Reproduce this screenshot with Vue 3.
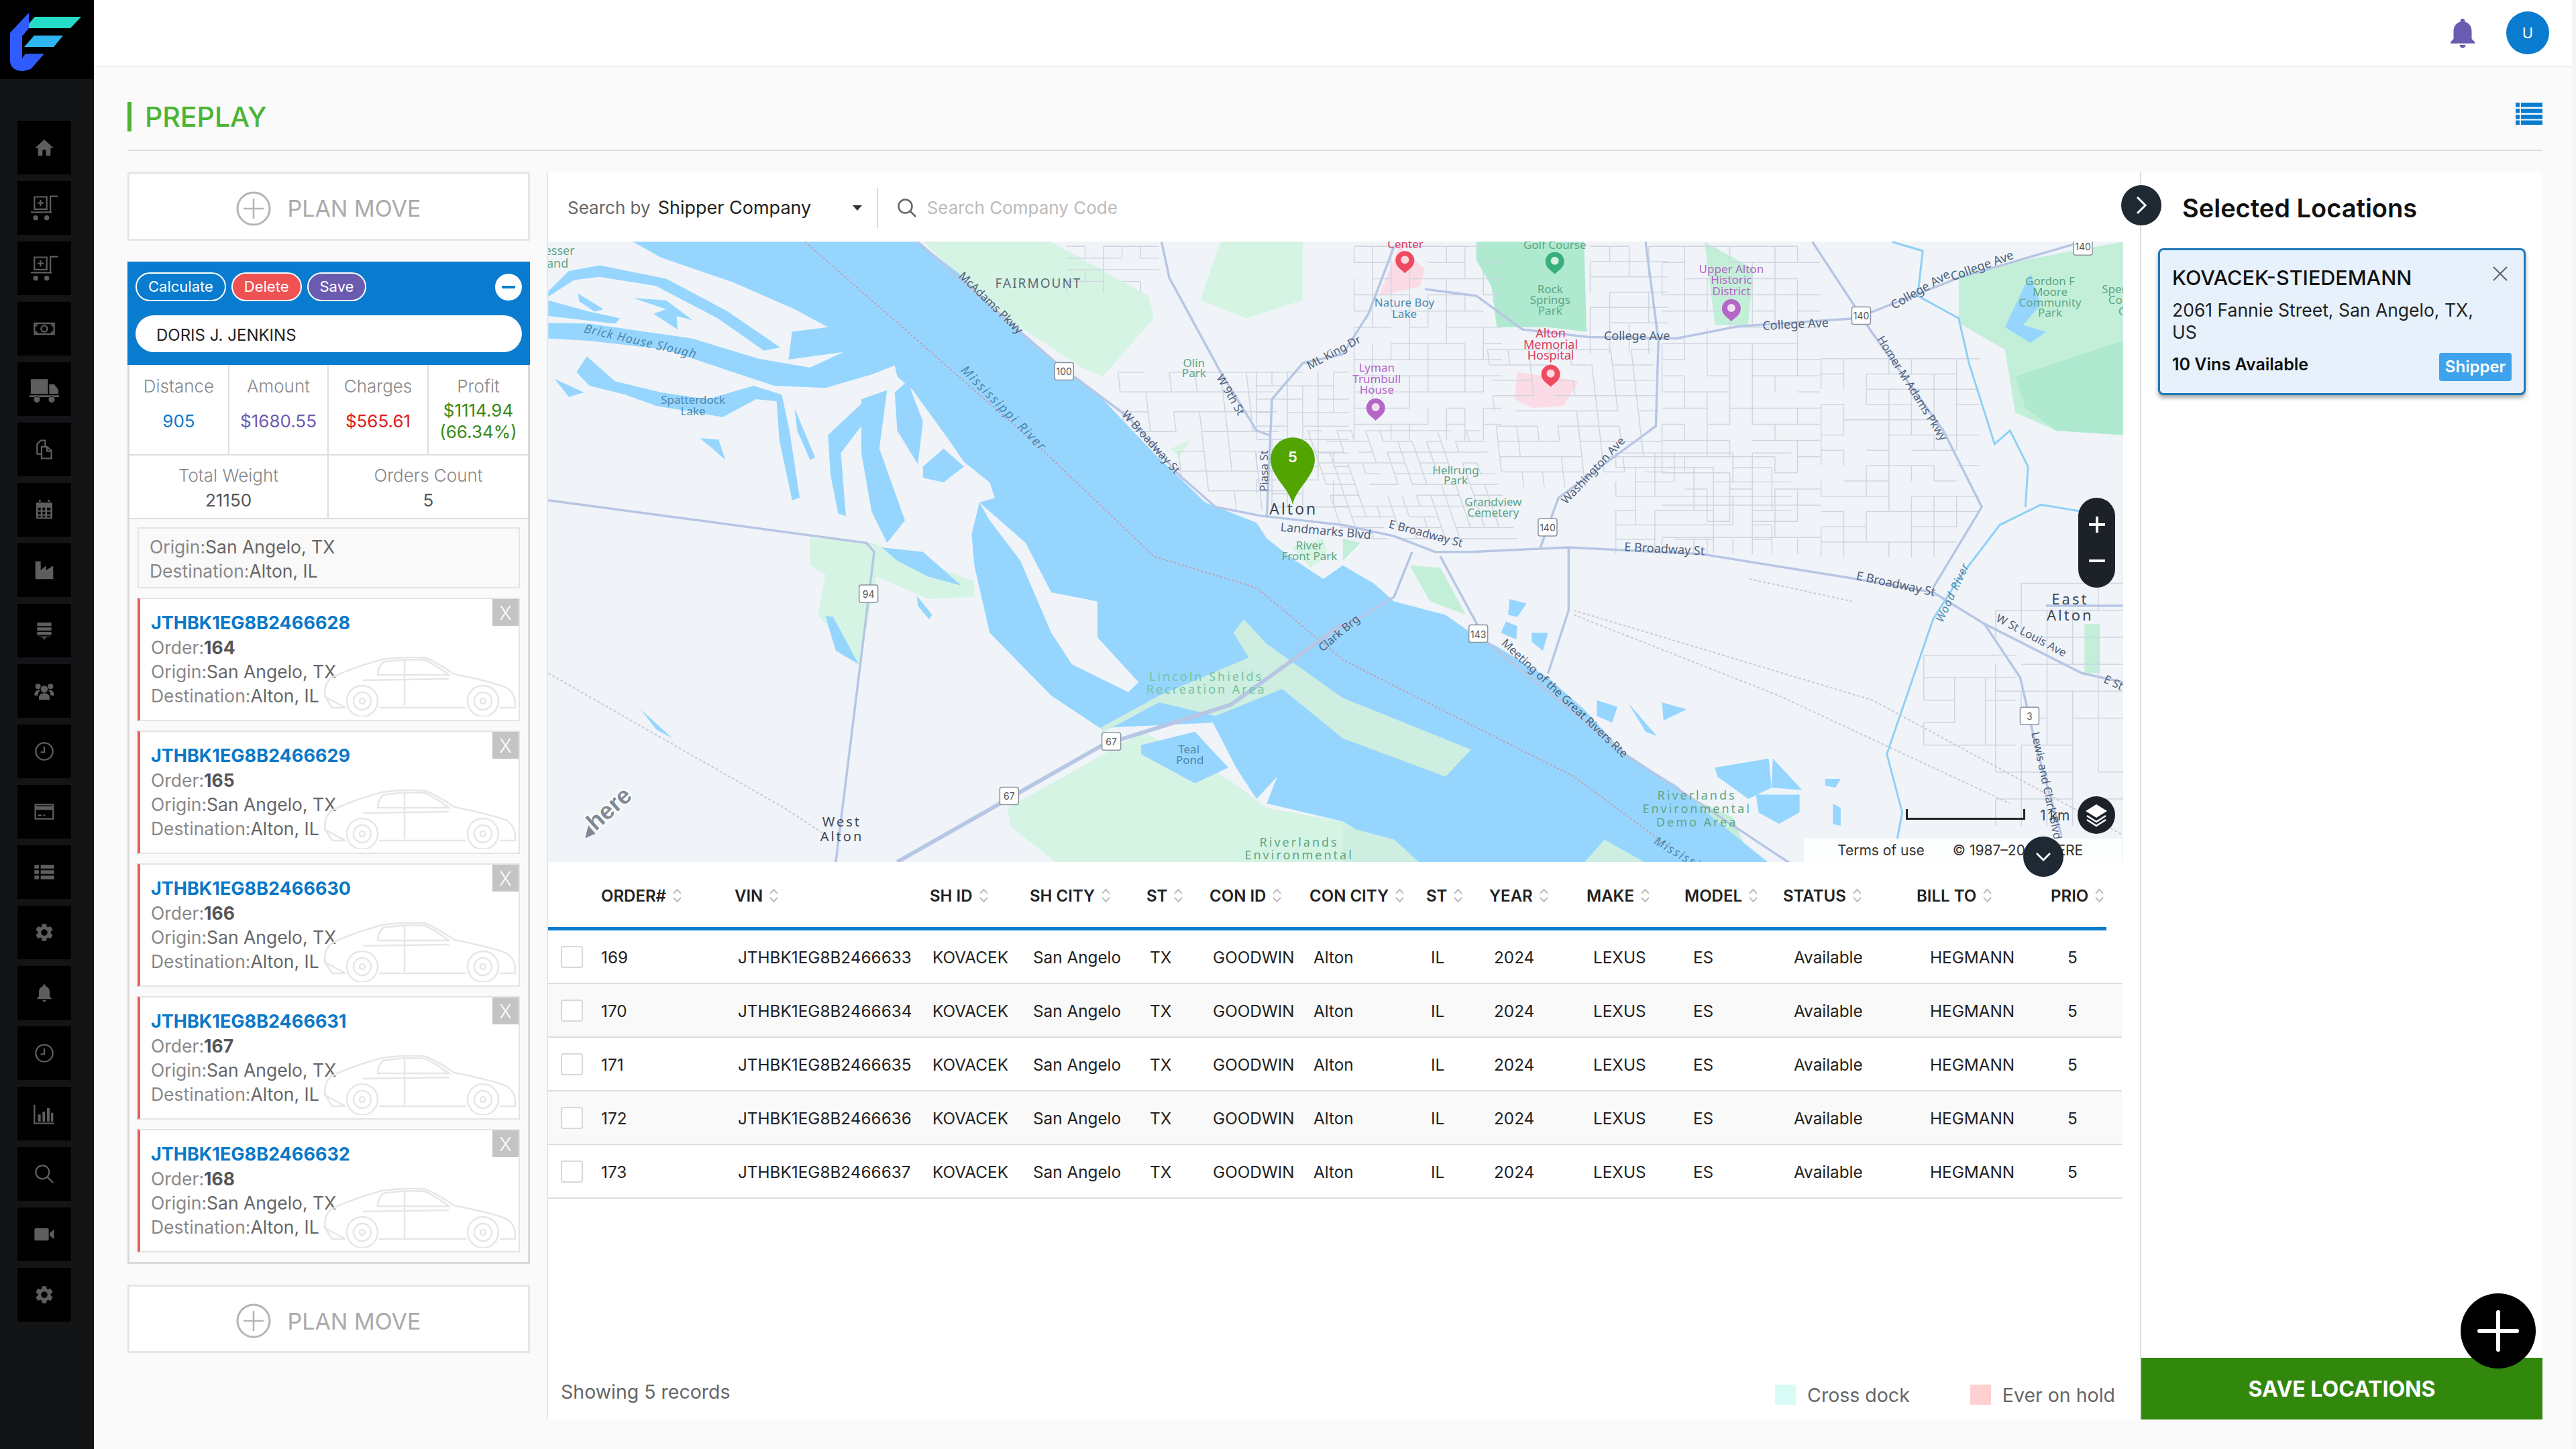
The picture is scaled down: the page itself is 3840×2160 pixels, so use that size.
<script setup>
// preplay screen: sidebar, plan move list, map, orders table, selected locations
const GEAR = "M19.14 12.94c.04-.3.06-.61.06-.94 0-.32-.02-.64-.07-.94l2.03-1.58a.49.49 0 0 0 .12-.61l-1.92-3.32a.488.488 0 0 0-.59-.22l-2.39.96c-.5-.38-1.03-.7-1.62-.94l-.36-2.54a.484.484 0 0 0-.48-.41h-3.84c-.24 0-.43.17-.47.41l-.36 2.54c-.59.24-1.13.57-1.62.94l-2.39-.96c-.22-.08-.47 0-.59.22L2.74 8.87c-.12.21-.08.47.12.61l2.03 1.58c-.05.3-.09.63-.09.94s.02.64.07.94l-2.03 1.58a.49.49 0 0 0-.12.61l1.92 3.32c.12.22.37.29.59.22l2.39-.96c.5.38 1.03.7 1.62.94l.36 2.54c.05.24.24.41.48.41h3.84c.24 0 .44-.17.47-.41l.36-2.54c.59-.24 1.13-.56 1.62-.94l2.39.96c.22.08.47 0 .59-.22l1.92-3.32c.12-.22.07-.47-.12-.61l-2.01-1.58zM12 15.6c-1.98 0-3.6-1.62-3.6-3.6s1.62-3.6 3.6-3.6 3.6 1.62 3.6 3.6-1.62 3.6-3.6 3.6z"
const BELL = "M12 22c1.1 0 2-.9 2-2h-4c0 1.1.9 2 2 2zm6-6v-5c0-3.07-1.63-5.64-4.5-6.32V4c0-.83-.67-1.5-1.5-1.5s-1.5.67-1.5 1.5v.68C7.64 5.36 6 7.92 6 11v5l-2 2v1h16v-1l-2-2z"
const CLOCK = { line: "M12 2.5a9.5 9.5 0 1 0 0 19 9.5 9.5 0 0 0 0-19zM12 6.5V13H8" }
const CART = {
  sz: 44,
  line: "M4 3h10v10H4zM9 5.500v5M6.500 8h5M17 15V2.500h6M1 15.500h17",
  fill: "M5 18a2 2 0 1 0 0 4 2 2 0 0 0 0-4zM14 18a2 2 0 1 0 0 4 2 2 0 0 0 0-4z"
}
const sideIcons = [
  { fill: "M12 3 1.5 12.5H5V21h5v-6.5h4V21h5v-8.500h3.500z" },
  CART,
  CART,
  { line: "M1 6h22v12H1zM4 6a3 3 0 0 1-3 3M20 6a3 3 0 0 0 3 3M4 18a3 3 0 0 0-3-3M20 18a3 3 0 0 1 3-3M12 8.500a3.500 3.500 0 1 0 0 7 3.500 3.500 0 0 0 0-7z" },
  { sz: 44, fill: "M1 4h14v12H1zM16 8h4l3.500 4.500V16H16zM0 17h24v1.500H0zM6 18a2.500 2.500 0 1 0 0 5 2.500 2.500 0 0 0 0-5zM18 18a2.500 2.500 0 1 0 0 5 2.500 2.500 0 0 0 0-5z" },
  { line: "M9 9h6l5 4.500V22H9zM15 9v5h5M9 17H4V6l4-4h5v7" },
  { fill: "M3 4h18v18H3zM6 1h2v2H6zM16 1h2v2h-2z", dark: "M5 9.500h3v3H5zM10 9.500h3v3h-3zM15 9.500h4v3h-4zM5 14h3v3H5zM10 14h3v3h-3zM15 14h4v3h-4zM5 18.500h3v2H5zM10 18.500h3v2h-3zM15 18.500h4v2h-4z" },
  { fill: "M2 2h6v10l6-5v5l8-5v15H2z" },
  { fill: "M5 3h14a1 1 0 0 1 1 1v3H4V4a1 1 0 0 1 1-1zM4 8.500h16V12H4zM4 13.500h16V17H4zM5 18.500h14L13 20l-1 3-1-3z" },
  { fill: "M12 6a4 4 0 1 0 0 8 4 4 0 0 0 0-8zM5 4a3 3 0 1 0 0 6 3 3 0 0 0 0-6zM19 4a3 3 0 1 0 0 6 3 3 0 0 0 0-6zM1 16c0-3 2-5 5-5l1.500.5C5.500 13 5 15 5 17H1zM23 16c0-3-2-5-5-5l-1.500.5c2 1.500 2.500 3.500 2.500 5.500h4zM12 14.500c-4 0-6 2.500-6 5V22h12v-2.500c0-2.500-2-5-6-5z" },
  CLOCK,
  { line: "M2 4h20v16H2zM2 9h20M5 16h4M11 16h2", fill: "M2 6h20v3H2z" },
  { fill: "M1 4h5v4H1zM8 4h15v4H8zM1 10h5v4H1zM8 10h15v4H8zM1 16h5v4H1zM8 16h15v4H8z" },
  { fill: GEAR },
  { fill: BELL },
  CLOCK,
  { line: "M1 2v21h22", fill: "M5 13h3v8H5zM10 10h3v11h-3zM15 6h3v15h-3zM19.500 11H22v10h-2.500z" },
  { line: "M10 2.500a7.500 7.500 0 1 0 0 15 7.500 7.500 0 0 0 0-15zM15.500 15.500 22 22" },
  { fill: "M3 5h12a2 2 0 0 1 2 2v10a2 2 0 0 1-2 2H3a2 2 0 0 1-2-2V7a2 2 0 0 1 2-2zM18 10.500l5-4v11l-5-4z" },
  { fill: GEAR }
]

const moves = [
  { vin: "JTHBK1EG8B2466628", order: 164 },
  { vin: "JTHBK1EG8B2466629", order: 165 },
  { vin: "JTHBK1EG8B2466630", order: 166 },
  { vin: "JTHBK1EG8B2466631", order: 167 },
  { vin: "JTHBK1EG8B2466632", order: 168 }
]

const headers = ["ORDER#", "VIN", "SH ID", "SH CITY", "ST", "CON ID", "CON CITY", "ST", "YEAR", "MAKE", "MODEL", "STATUS", "BILL TO", "PRIO"]
const rows = [
  ["169", "JTHBK1EG8B2466633"],
  ["170", "JTHBK1EG8B2466634"],
  ["171", "JTHBK1EG8B2466635"],
  ["172", "JTHBK1EG8B2466636"],
  ["173", "JTHBK1EG8B2466637"]
].map(r => [...r, "KOVACEK", "San Angelo", "TX", "GOODWIN", "Alton", "IL", "2024", "LEXUS", "ES", "Available", "HEGMANN", "5"])

// map drawing: coords are taken off the crops, X runs 0-3088, Y 180-1562
const OFF = 1568
const shift = pts => pts.map(([x, y]) => `${x + OFF},${y}`).join(" ")
const poly = pts => pts.map(([x, y]) => `${x},${y}`).join(" ")

const river = [[185,180],[740,180],[820,250],[900,340],[1000,440],[1100,530],[1200,650],[1300,760],[1400,805],[1420,840],[1470,885],[1530,930],[1568,900],[1628,940],[1668,980],[1768,1010],[1818,1050],[1868,1080],[1968,1150],[2038,1220],[2118,1320],[2218,1390],[2298,1470],[2398,1562],[1700,1562],[1568,1470],[1420,1430],[1440,1370],[1400,1420],[1360,1350],[1315,1250],[1095,1262],[1000,1190],[880,1050],[850,900],[845,830],[860,760],[890,750],[880,715],[830,670],[800,620],[730,510],[700,480],[695,455],[650,475],[560,505],[460,500],[380,470],[250,420],[100,400],[20,395],[20,360],[100,362],[300,395],[430,440],[530,460],[595,425],[488,442],[495,380],[565,370],[500,330],[380,270],[240,215]]
const landBits = [
  [[860,760],[950,850],[1000,960],[1090,980],[1090,1060],[1170,1160],[1150,1182],[1040,1120],[1000,1050],[940,890],[880,800]]
]
const islands = [
  [[1095,1262],[1210,1190],[1385,1105],[1355,1050],[1375,1020],[1420,1075],[1568,1195],[1818,1310],[1768,1370],[1568,1285],[1450,1175],[1320,1235],[1210,1205],[1100,1272]],
  [[1568,1480],[1668,1510],[1718,1562],[1568,1562]],
  [[2038,1562],[2078,1510],[2158,1562]]
]
const lakes = [
  [[20,290],[60,245],[120,232],[250,262],[370,335],[472,415],[440,422],[350,350],[230,278],[120,258],[70,265],[20,302]],
  [[20,310],[100,335],[160,350],[150,362],[60,350],[20,345]],
  [[78,295],[128,330],[110,335],[80,312]],
  [[185,305],[250,310],[302,355],[270,345],[272,375],[225,340],[250,330]],
  [[95,435],[150,490],[240,515],[330,530],[420,500],[475,520],[490,600],[510,750],[495,755],[470,620],[465,535],[425,530],[360,570],[230,545],[170,520],[100,500],[75,470]],
  [[32,485],[90,515],[60,525]],
  [[500,550],[540,660],[530,665],[505,600]],
  [[315,617],[352,620],[365,665],[340,640]],
  [[565,610],[630,540],[640,575],[590,650],[600,790],[585,785],[570,700]],
  [[630,530],[680,510],[665,640],[715,800],[680,850],[650,780],[630,650]],
  [[695,515],[720,490],[750,580],[740,675],[700,600]],
  [[750,680],[790,640],[830,680],[790,715],[750,705]],
  [[670,860],[750,870],[825,945],[760,925],[700,890]],
  [[738,968],[768,1010],[762,1020],[740,990]],
  [[560,1012],[575,1015],[625,1120],[580,1090]],
  [[200,1220],[262,1285],[230,1265]],
  [[1175,1300],[1280,1270],[1345,1350],[1280,1385],[1175,1320]]
]
const lakesRight = [
  [[325,975],[358,985],[340,1015],[322,1010]],
  [[318,1025],[340,1035],[338,1065],[308,1050]],
  [[368,1050],[400,1050],[390,1090],[368,1070]],
  [[495,1200],[535,1215],[525,1250],[495,1235]],
  [[555,1205],[612,1280],[590,1270]],
  [[622,1205],[670,1220],[625,1245]],
  [[725,1350],[830,1330],[835,1395],[790,1420],[730,1370]],
  [[838,1330],[895,1400],[835,1395]],
  [[805,1410],[890,1410],[890,1450],[850,1475],[810,1450]],
  [[940,1375],[970,1375],[960,1395],[940,1390]],
  [[955,1430],[970,1440],[970,1480],[955,1475]],
  [[1340,250],[1360,320],[1325,365],[1370,380],[1340,405],[1290,370]]
]
const lightGreen = [
  [[750,180],[1000,180],[1190,300],[1200,350],[1100,480],[1060,460],[900,340]],
  [[1290,310],[1330,180],[1490,180],[1490,310],[1380,350]],
  [[530,838],[650,850],[850,935],[850,970],[760,975],[660,925],[625,1120],[545,1010],[560,920],[530,900]],
  [[915,1440],[1180,1270],[1350,1380],[1420,1440],[1568,1470],[1700,1562],[1010,1562],[920,1480]],
  [[1233,640],[1272,620],[1250,660]],
  [[1468,860],[1530,840],[1540,880],[1505,905]]
]
const greenRight = [
  [[1200,250],[1420,200],[1520,180],[1520,610],[1390,600],[1310,560],[1290,420],[1200,360]],
  [[705,180],[800,240],[790,365],[725,365]],
  [[130,900],[190,905],[240,1010],[170,980]],
  [[0,840],[35,850],[0,890]],
  [[590,1370],[760,1460],[780,1515],[690,1500]],
  [[1445,1030],[1475,1030],[1475,1140],[1445,1140]]
]
const darkGreen = [
  [[260,180],[470,180],[475,380],[400,370],[300,370],[290,280],[260,220]],
  [[1310,480],[1520,400],[1520,610],[1390,600],[1330,550]]
]
const pink = [
  [[70,300],[110,190],[160,240],[150,280]],
  [[340,470],[460,490],[430,545],[370,550],[335,530]]
]
const mainRoads = [
  "M740 180 1010 450 1150 570 1250 700 1320 770 1410 790 1568 810 1668 835 1748 870 1818 870 2008 860 2268 875 2568 930 2718 960 2818 1030 2888 1150 2918 1300 2968 1500",
  "M2483 180 2598 380 2738 600 2813 770 2718 950",
  "M1728 285 1828 300 1918 375 2048 392 2218 395 2338 368 2568 350 2768 260 2993 185",
  "M2158 180 2183 400 2178 590 1988 750 1953 860",
  "M1568 430 1490 450 1430 530 1420 790",
  "M1568 430 1618 340 1668 190",
  "M1215 180 1230 260 1330 470 1400 600 1425 610",
  "M20 755 640 850 655 870 580 1562",
  "M1703 870 1668 970 1568 1040",
  "M1758 880 1848 1070 2118 1320 2438 1562",
  "M2818 1030 3008 1140 3088 1160",
  "M2008 860 2008 1000 1968 1140",
  "M2938 990 3088 990"
]
const highway = "M1568 1030 1350 1210 1100 1300 900 1430 700 1560"
const rails = [
  "M20 1140 480 1440 560 1500",
  "M2018 1010 2418 1190 2868 1430",
  "M2018 1000 2600 1200 3088 1500",
  "M2360 930 2560 980"
]
const border = "M520 180 980 640 1200 880 1400 950 1568 1110 2018 1370 2208 1530"
const creeks = [
  "M2638 180 2698 200 2688 300 2768 350 2788 450 2838 630 2868 600 2903 680 2898 770",
  "M3008 780 2928 765 2848 810 2768 930 2718 1020 2628 1320 2658 1450 2648 1510"
]

// pseudo-random street blocks so the town looks like a town and not a plain grid
let seed = 7
const rnd = () => (seed = (seed * 9301 + 49297) % 233280) / 233280
function grid(x, y, w, h, dx, dy, skew) {
  let d = ""
  for (let j = 0; j <= h; j += dy) {
    for (let i = 0; i < w; i += dx) {
      if (rnd() > 0.22) d += `M${x + i + j * skew} ${y + j}h${dx}`
      if (j < h && rnd() > 0.3) d += `M${x + i + j * skew} ${y + j}l${dy * skew} ${dy}`
    }
  }
  return d
}
const streets = [
  grid(1500, 600, 330, 240, 28, 24, 0.3),
  grid(1400, 470, 170, 300, 30, 30, 0),
  grid(1590, 190, 260, 400, 36, 36, 0),
  grid(1850, 420, 320, 280, 40, 34, 0.1),
  grid(2050, 190, 140, 220, 38, 34, 0),
  grid(2190, 190, 300, 680, 44, 36, 0),
  grid(2500, 440, 300, 440, 44, 34, 0),
  grid(2100, 650, 340, 200, 38, 32, 0),
  grid(1030, 190, 180, 80, 36, 26, 0),
  grid(1130, 470, 280, 280, 50, 44, 0.1),
  grid(2840, 940, 240, 500, 50, 60, 0),
  grid(2700, 1100, 130, 200, 60, 50, 0)
].join("")

const mx = x => x / 1.307 - 15
const my = y => y / 1.493 - 120
const GREEN = "#5fa585", BLUE = "#4d87ad", GRAY = "#5b6675", RED = "#dd3b5a", PUR = "#b465c6", ROAD = "#4f5f78"
const labels = []
const add = (ox, list) => list.forEach(([t, x, y, c, s = 18, r = 0, ls = 0, it = false]) =>
  labels.push({ t, x: mx(x + ox), y: my(y), c, s, r, ls, it }))
add(0, [
  ["esser", 42, 198, GREEN], ["and", 38, 227, GREEN],
  ["FAIRMOUNT", 975, 272, GRAY, 19, 0, 2],
  ["McAdams Pkwy", 883, 315, ROAD, 17, 44],
  ["Brick House Slough", 200, 400, BLUE, 18, 13, 1, true],
  ["Spatterdock", 302, 531, BLUE, 17], ["Lake", 302, 556, BLUE, 17],
  ["Mississippi River", 908, 550, BLUE, 19, 45, 2, true],
  ["W 9th St", 1350, 520, ROAD, 17, 60],
  ["Olin", 1278, 448, GREEN, 17], ["Park", 1278, 471, GREEN, 17],
  ["W Broadway St", 1195, 625, ROAD, 17, 48],
  ["ML King Dr", 1550, 425, ROAD, 17, -28],
  ["Piasa St", 1414, 690, ROAD, 17, -90],
  ["Landmarks Blvd", 1535, 822, ROAD, 18, 5],
  ["Alton", 1472, 773, "#3c4654", 23, 0, 3],
  ["River", 1503, 855, GREEN, 17], ["Front Park", 1503, 879, GREEN, 17],
  ["Clark Brg", 1560, 1050, ROAD, 17, -40],
  ["Lincoln Shields", 1302, 1146, "#74c3a0", 18, 0, 3], ["Recreation Area", 1302, 1175, "#74c3a0", 18, 0, 3],
  ["Teal", 1268, 1308, BLUE, 17], ["Pond", 1270, 1333, BLUE, 17],
  ["West", 592, 1470, "#3c4654", 20, 0, 3], ["Alton", 592, 1502, "#3c4654", 20, 0, 3],
  ["Riverlands", 1483, 1515, GREEN, 18, 0, 3], ["Environmental", 1483, 1544, GREEN, 18, 0, 3]
])
add(OFF, [
  ["Center", 122, 184, RED, 17], ["Golf Course", 413, 186, GREEN, 17],
  ["Rock", 404, 285, GREEN, 17], ["Springs", 404, 309, GREEN, 17], ["Park", 404, 332, GREEN, 17],
  ["Nature Boy", 120, 315, BLUE, 17], ["Lake", 120, 340, BLUE, 17],
  ["Alton", 405, 382, RED, 18], ["Memorial", 405, 407, RED, 18], ["Hospital", 405, 432, RED, 18],
  ["College Ave", 573, 388, ROAD, 18], ["College Ave", 882, 362, ROAD, 18, -3],
  ["College Ave", 1125, 285, ROAD, 18, -30], ["College Ave", 1245, 232, ROAD, 18, -20],
  ["Upper Alton", 757, 239, PUR, 17], ["Historic", 757, 264, PUR, 17], ["District", 757, 289, PUR, 17],
  ["Gordon F", 1378, 267, GREEN, 17], ["Moore", 1378, 291, GREEN, 17], ["Community", 1378, 314, GREEN, 17], ["Park", 1378, 337, GREEN, 17],
  ["Spen", 1505, 284, GREEN, 17], ["Con", 1512, 309, GREEN, 17], ["C", 1518, 334, GREEN, 17],
  ["Lyman", 66, 459, PUR, 17], ["Trumbull", 66, 484, PUR, 17], ["House", 66, 509, PUR, 17],
  ["Homer M Adams Pkwy", 1110, 505, ROAD, 17, 58],
  ["Washington Ave", 487, 688, ROAD, 17, -47],
  ["Hellrung", 220, 687, GREEN, 17], ["Park", 220, 710, GREEN, 17],
  ["Grandview", 293, 758, GREEN, 17], ["Cemetery", 293, 782, GREEN, 17],
  ["E Broadway St", 162, 828, ROAD, 17, 15], ["E Broadway St", 627, 862, ROAD, 18, 3], ["E Broadway St", 1078, 940, ROAD, 18, 12],
  ["Wood River", 1187, 960, BLUE, 17, -65, 1, true],
  ["East", 1417, 973, "#3c4654", 22, 0, 3], ["Alton", 1417, 1010, "#3c4654", 22, 0, 3],
  ["W St Louis Ave", 1342, 1055, ROAD, 17, 28],
  ["E St", 1502, 1160, ROAD, 17, 25],
  ["Meeting of the Great Rivers Rte", 433, 1195, ROAD, 17, 43],
  ["Lewis and Clark Blvd", 1372, 1390, ROAD, 17, 78],
  ["Riverlands", 690, 1411, GREEN, 18, 0, 3], ["Environmental", 690, 1441, GREEN, 18, 0, 3], ["Demo Area", 690, 1470, GREEN, 18, 0, 3],
  ["Mississippi", 670, 1550, BLUE, 18, 30, 2, true]
])
const shields = [
  ["100", 1025, 468], ["94", 644, 963], ["67", 1117, 1292], ["67", 918, 1413],
  ["140", 399 + OFF, 815], ["143", 264 + OFF, 1052], ["3", 1338 + OFF, 1235], ["140", 1010 + OFF, 344], ["140", 1442 + OFF, 190]
].map(([t, x, y]) => ({ t, x: mx(x), y: my(y) }))
const pins = [
  [121, 220, "#ef4a5f"], [413, 222, "#39b07c"], [757, 327, "#b465c6"], [405, 473, "#ef4a5f"], [64, 548, "#b465c6"]
].map(([x, y, c]) => ({ x: mx(x + OFF), y: my(y), c }))
</script>

<template>
  <div class="page">
    <aside class="side">
      <div class="logo">
        <svg width="140" height="118" viewBox="0 0 140 118">
          <path d="M52 25h69l-16 17H37z" fill="#26dcc8" />
          <path d="M51 53h43L80 70H36z" fill="#2fb6f2" />
          <path d="M43 19 15 49v43q2 14 20 14l11-3 20-23H38l-5 7V54l10-12z" fill="#2f5bff" />
        </svg>
      </div>
      <nav class="side-nav">
        <div v-for="(ic, i) in sideIcons" :key="i" class="side-btn">
          <svg :width="ic.sz || 32" :height="ic.sz || 32" viewBox="0 0 24 24">
            <path v-if="ic.fill" :d="ic.fill" fill="#5e5e5e" />
            <path v-if="ic.dark" :d="ic.dark" fill="#000" />
            <path v-if="ic.line" :d="ic.line" fill="none" stroke="#5e5e5e" :stroke-width="ic.sz ? 1.2 : 1.7" />
          </svg>
        </div>
      </nav>
    </aside>

    <div class="main">
      <header class="topbar">
        <svg class="top-bell" width="54" height="54" viewBox="0 0 24 24"><path :d="BELL" fill="#6a5bb0" /></svg>
        <div class="avatar">U</div>
      </header>

      <div class="content">
        <div class="title-row">
          <h1 class="title">PREPLAY</h1>
          <svg width="40" height="33" viewBox="0 0 40 33">
            <path d="M0 0h6v6.500H0zM8 0h32v6.500H8zM0 9h6v6.500H0zM8 9h32v6.500H8zM0 18h6v6.500H0zM8 18h32v6.500H8zM0 26.500h6V33H0zM8 26.500h32V33H8z" fill="#0a7ccf" />
          </svg>
        </div>

        <div class="body">
          <section class="left">
            <button class="plan">
              <svg width="52" height="52" viewBox="0 0 52 52"><circle cx="26" cy="26" r="24" fill="none" stroke="#b5b5b5" stroke-width="3" /><path d="M26 11v30M11 26h30" stroke="#b5b5b5" stroke-width="2.500" /></svg>
              PLAN MOVE
            </button>

            <div class="move">
              <div class="move-head">
                <div class="btns">
                  <span class="pill">Calculate</span>
                  <span class="pill red">Delete</span>
                  <span class="pill purple">Save</span>
                  <span class="minus"><i></i></span>
                </div>
                <div class="driver">DORIS J. JENKINS</div>
              </div>

              <div class="stats">
                <div class="stat"><span class="lbl">Distance</span><div class="val c-blue">905</div></div>
                <div class="stat"><span class="lbl">Amount</span><div class="val c-purple">$1680.55</div></div>
                <div class="stat"><span class="lbl">Charges</span><div class="val c-red">$565.61</div></div>
                <div class="stat last"><span class="lbl">Profit</span><div class="val c-green">$1114.94<br />(66.34%)</div></div>
              </div>
              <div class="totals">
                <div class="total"><span class="lbl">Total Weight</span><b>21150</b></div>
                <div class="total last"><span class="lbl">Orders Count</span><b>5</b></div>
              </div>

              <div class="route">
                <div><span class="muted">Origin:</span>San Angelo, TX</div>
                <div><span class="muted">Destination:</span>Alton, IL</div>
              </div>

              <div v-for="m in moves" :key="m.vin" class="car">
                <svg class="car-bg" width="288" height="89" viewBox="0 0 288 89" fill="none" stroke="#e6e6e6" stroke-width="2.500">
                  <path d="M4 60C2 50 4 40 12 32 30 22 60 12 88 4 120 0 140 0 154 2 170 8 184 18 196 26 225 32 255 38 274 46 284 52 288 62 287 76H264M214 76H84M34 76H14L4 60Z" />
                  <path d="M90 8C84 14 82 20 82 27H188C176 18 165 10 152 5 130 3 108 5 90 8ZM122 5V27M60 35 188 33M122 27V74" />
                  <circle cx="59" cy="66" r="23" /><circle cx="59" cy="66" r="13" /><circle cx="59" cy="66" r="4" />
                  <circle cx="239" cy="66" r="23" /><circle cx="239" cy="66" r="13" /><circle cx="239" cy="66" r="4" />
                </svg>
                <span class="x">X</span>
                <div class="vin">{{ m.vin }}</div>
                <div><span class="muted">Order:</span><b>{{ m.order }}</b></div>
                <div><span class="muted">Origin:</span>San Angelo, TX</div>
                <div><span class="muted">Destination:</span>Alton, IL</div>
              </div>
            </div>

            <button class="plan bottom">
              <svg width="52" height="52" viewBox="0 0 52 52"><circle cx="26" cy="26" r="24" fill="none" stroke="#b5b5b5" stroke-width="3" /><path d="M26 11v30M11 26h30" stroke="#b5b5b5" stroke-width="2.500" /></svg>
              PLAN MOVE
            </button>
          </section>

          <section class="center">
            <div class="search">
              <span class="by">Search by</span>
              <span class="by-val">Shipper Company</span>
              <svg class="caret" width="14" height="8" viewBox="0 0 14 8"><path d="M0 0h14L7 8z" fill="#333" /></svg>
              <span class="sep"></span>
              <svg width="30" height="30" viewBox="0 0 30 30" fill="none" stroke="#666" stroke-width="2.600"><circle cx="12.500" cy="12.500" r="10" /><path d="M20 20l8 8" /></svg>
              <span class="ph">Search Company Code</span>
            </div>

            <div class="map">
              <svg class="map-svg" width="2348" height="925" viewBox="0 0 2348 925">
                <rect width="2348" height="925" fill="#f0f4f9" />
                <g transform="translate(-15 -120) scale(.7651 .6698)">
                  <polygon v-for="(p, i) in lightGreen" :key="'lg' + i" :points="poly(p)" fill="#d6f4e4" />
                  <polygon v-for="(p, i) in greenRight" :key="'gr' + i" :points="shift(p)" fill="#c3efd9" />
                  <polygon v-for="(p, i) in darkGreen" :key="'dg' + i" :points="shift(p)" fill="#aee9d0" />
                  <polygon v-for="(p, i) in pink" :key="'pk' + i" :points="shift(p)" fill="#fbdbe6" />
                  <path :d="streets" fill="none" stroke="#cfd6e0" stroke-width="1.500" vector-effect="non-scaling-stroke" />
                  <polygon :points="poly(river)" fill="#96d6fe" />
                  <polygon v-for="(p, i) in landBits" :key="'lb' + i" :points="poly(p)" fill="#f0f4f9" />
                  <polygon v-for="(p, i) in islands" :key="'is' + i" :points="poly(p)" fill="#cdeee0" />
                  <polygon v-for="(p, i) in lakes" :key="'lk' + i" :points="poly(p)" fill="#96d6fe" />
                  <polygon v-for="(p, i) in lakesRight" :key="'lr' + i" :points="shift(p)" fill="#96d6fe" />
                  <path v-for="(d, i) in creeks" :key="'cr' + i" :d="d" fill="none" stroke="#8fd0f6" stroke-width="3" vector-effect="non-scaling-stroke" />
                  <path :d="border" fill="none" stroke="#c99ab0" stroke-width="2" stroke-dasharray="3 3" vector-effect="non-scaling-stroke" />
                  <path v-for="(d, i) in rails" :key="'rl' + i" :d="d" fill="none" stroke="#c8ccd2" stroke-width="2" stroke-dasharray="4 3" vector-effect="non-scaling-stroke" />
                  <path v-for="(d, i) in mainRoads" :key="'rd' + i" :d="d" fill="none" stroke="#b7c6e4" stroke-width="3.500" vector-effect="non-scaling-stroke" />
                  <path :d="highway" fill="none" stroke="#b7c6e4" stroke-width="6" vector-effect="non-scaling-stroke" />
                </g>
                <g v-for="s in shields" :key="s.t + s.x">
                  <rect :x="s.x - 14" :y="s.y - 13" width="28" height="26" rx="3" fill="#fff" stroke="#8d94a0" stroke-width="1.500" />
                  <text :x="s.x" :y="s.y + 6" text-anchor="middle" font-size="14" fill="#555">{{ s.t }}</text>
                </g>
                <g v-for="p in pins" :key="p.x">
                  <path :d="`M${p.x} ${p.y + 20}c-6-6-14-10-14-19a14 14 0 0 1 28 0c0 9-8 13-14 19z`" :fill="p.c" />
                  <circle :cx="p.x" :cy="p.y" r="6" fill="#fff" opacity=".8" />
                </g>
                <text v-for="(l, i) in labels" :key="'lb' + i" :x="l.x" :y="l.y" :fill="l.c" :font-size="l.s" :font-style="l.it ? 'italic' : 'normal'" :letter-spacing="l.ls" text-anchor="middle" dominant-baseline="central" :transform="l.r ? `rotate(${l.r} ${l.x} ${l.y})` : null" class="map-label">{{ l.t }}</text>
                <g transform="rotate(-42 88 848)">
                  <path d="M36 857 52 846V862z" fill="#7f8a96" />
                  <text x="92" y="860" class="here" text-anchor="middle">here</text>
                </g>
              </svg>

              <div class="pin">
                <svg width="66" height="100" viewBox="0 0 66 100"><path d="M33 100C28 76 0 58 0 33a33 33 0 0 1 66 0c0 25-28 43-33 67z" fill="#52a400" /></svg>
                <span>5</span>
              </div>
              <div class="zoomer">
                <svg width="30" height="30" viewBox="0 0 30 30"><path d="M15 3v24M3 15h24" stroke="#fff" stroke-width="4" /></svg>
                <svg width="30" height="30" viewBox="0 0 30 30"><path d="M3 15h24" stroke="#fff" stroke-width="4" /></svg>
              </div>
              <div class="layers">
                <svg width="38" height="38" viewBox="0 0 38 38"><path d="M19 3 35 13 19 23 3 13z" fill="#fff" /><path d="M5 20l14 9 14-9M5 26l14 9 14-9" fill="none" stroke="#fff" stroke-width="2.500" /></svg>
              </div>
              <div class="scale"></div>
              <span class="km">1 km</span>
              <div class="terms"><span>Terms of use</span><span>© 1987–2024 HERE</span></div>
              <div class="chev">
                <svg width="26" height="16" viewBox="0 0 26 16"><path d="M3 3l10 10L23 3" fill="none" stroke="#fff" stroke-width="2.800" /></svg>
              </div>
            </div>

            <div class="thead">
              <div v-for="(h, i) in headers" :key="i" class="th">
                {{ h }}
                <svg width="15" height="22" viewBox="0 0 15 22" fill="none" stroke="#bcbcbc" stroke-width="2"><path d="M2 8l5.500-6L13 8M2 14l5.500 6L13 14" /></svg>
              </div>
            </div>
            <div v-for="(r, i) in rows" :key="i" class="tr" :class="{ even: i % 2 }">
              <div class="cb-cell"><span class="cb"></span></div>
              <div v-for="(c, j) in r" :key="j">{{ c }}</div>
            </div>

            <div class="foot">
              <span class="showing">Showing 5 records</span>
              <span class="legend"><i class="sw teal"></i>Cross dock</span>
              <span class="legend hold"><i class="sw rose"></i>Ever on hold</span>
            </div>
          </section>

          <section class="right">
            <div class="toggle">
              <svg width="20" height="30" viewBox="0 0 20 30"><path d="M4 3l12 12L4 27" fill="none" stroke="#fff" stroke-width="3" /></svg>
            </div>
            <h2 class="sel-title">Selected Locations</h2>
            <div class="loc">
              <svg class="loc-x" width="22" height="22" viewBox="0 0 22 22"><path d="M1 1l20 20M21 1 1 21" stroke="#666" stroke-width="2.200" /></svg>
              <div class="loc-name">KOVACEK-STIEDEMANN</div>
              <div class="loc-addr">2061 Fannie Street, San Angelo, TX, US</div>
              <div class="loc-foot">
                <b>10 Vins Available</b>
                <span class="badge">Shipper</span>
              </div>
            </div>
            <div class="fab">
              <svg width="62" height="62" viewBox="0 0 62 62"><path d="M31 3v56M3 31h56" stroke="#fff" stroke-width="6" stroke-linecap="round" /></svg>
            </div>
            <button class="save">SAVE LOCATIONS</button>
          </section>
        </div>
      </div>
    </div>
    <div class="strip"></div>
  </div>
</template>

<style>
body { margin: 0; background: #fafafa; }
</style>

<style scoped>
* { box-sizing: border-box; }
.page { display: flex; width: 3840px; height: 2160px; overflow: hidden; font-family: Inter, "Liberation Sans", sans-serif; background: #fafafa; color: #222; }
.strip { width: 6px; flex: none; background: #f5f5f5; }

.side { width: 140px; flex: none; background: #131416; }
.logo { height: 118px; background: #000; }
.logo svg { display: block; }
.side-nav { display: flex; flex-direction: column; gap: 10px; padding: 62px 0 0 26px; }
.side-btn { width: 80px; height: 80px; background: #000; display: flex; align-items: center; justify-content: center; }

.main { flex: 1; min-width: 0; display: flex; flex-direction: column; }
.topbar { height: 100px; flex: none; background: #fff; border-bottom: 2px solid #eee; display: flex; align-items: center; justify-content: flex-end; padding-right: 34px; }
.top-bell { margin-right: 38px; }
.avatar { width: 64px; height: 64px; border-radius: 50%; background: #0a7ccf; color: #fff; font-size: 22px; display: flex; align-items: center; justify-content: center; }

.content { flex: 1; padding: 0 44px 0 50px; }
.title-row { height: 125px; padding-top: 52px; border-bottom: 2px solid #ddd; display: flex; justify-content: space-between; align-items: flex-start; }
.title { margin: 0; height: 44px; border-left: 6px solid #4bb534; padding-left: 20px; color: #4bb534; font-size: 41px; line-height: 44px; font-weight: 500; }
.title-row svg { margin-top: 1px; }

.body { display: flex; margin-top: 31px; height: 1860px; position: relative; }
.left { width: 600px; flex: none; margin-right: 25px; }

.plan { width: 100%; height: 103px; border: 3px solid #e6e6e6; background: #fff; display: flex; align-items: center; justify-content: center; gap: 24px; font-family: inherit; font-size: 34px; color: #aaa; padding: 6px 0 0; }
.plan.bottom { margin-top: 31px; height: 102px; }

.move { margin-top: 31px; height: 1494px; border: solid #d9d9d9; border-width: 0 3px 3px; background: #fafafa; }
.move-head { margin: 0 -3px; height: 154px; background: #0a7ccf; padding: 16px 12px 0; }
.btns { display: flex; align-items: center; gap: 8px; height: 43px; }
.pill { height: 43px; border: 2px solid #fff; border-radius: 22px; padding: 0 17px; line-height: 39px; color: #fff; font-size: 22px; background: #0a7ccf; }
.pill.red { background: #ee5253; }
.pill.purple { background: #6b5bb0; }
.minus { margin-left: auto; width: 40px; height: 40px; border-radius: 50%; background: #fff; display: flex; align-items: center; justify-content: center; }
.minus i { width: 20px; height: 4px; background: #0a7ccf; }
.driver { margin-top: 21px; height: 55px; border-radius: 28px; background: #fff; padding-left: 31px; line-height: 60px; font-size: 24px; color: #222; }

.stats { display: grid; grid-template-columns: 149px 148px 149px 1fr; height: 135px; background: #fff; border-bottom: 2px solid #ddd; }
.stat { border-right: 2px solid #ddd; display: flex; flex-direction: column; align-items: center; padding-top: 14px; }
.stat.last, .total.last { border-right: 0; }
.lbl { font-size: 26px; line-height: 36px; font-weight: 300; color: #888; }
.val { flex: 1; display: flex; align-items: center; justify-content: center; text-align: center; font-size: 26px; line-height: 32px; margin-bottom: 16px; }
.c-blue { color: #0a7ccf; }
.c-purple { color: #6b5bb0; }
.c-red { color: #dd1c1c; }
.c-green { color: #3a8a16; }
.totals { display: grid; grid-template-columns: 297px 1fr; height: 95px; background: #fff; border-bottom: 2px solid #ddd; }
.total { border-right: 2px solid #ddd; display: flex; flex-direction: column; align-items: center; padding-top: 12px; }
.total b { font-size: 26px; line-height: 38px; font-weight: 400; color: #555; }

.route { margin: 12px 12px 14px; height: 91px; border: 2px solid #e4e4e4; background: #f9f9f9; padding: 9px 16px; font-size: 26.500px; line-height: 36px; color: #666; }
.muted { color: #888; }

.car { position: relative; margin: 0 12px 14px; height: 184px; border: 2px solid #e4e4e4; border-left: 4px solid #e85c5c; background: #fff; padding: 18px 0 0 16px; font-size: 26.500px; line-height: 36px; color: #666; overflow: hidden; }
.vin { font-weight: 700; font-size: 27px; color: #0a78c8; }
.car b { font-weight: 700; color: #555; }
.car-bg { position: absolute; left: 272px; top: 86px; }
.x { position: absolute; right: 0; top: 0; width: 39px; height: 40px; background: #c4c4c4; color: #fff; font-size: 28px; line-height: 42px; text-align: center; font-weight: 300; }

.center { width: 2377px; flex: none; background: #fff; border-left: 2px solid #e6e6e6; border-right: 2px solid #ddd; display: flex; flex-direction: column; }
.search { height: 104px; flex: none; display: flex; align-items: center; padding: 3px 0 0 29px; font-size: 26px; }
.by { color: #666; margin-right: 11px; }
.by-val { color: #222; width: 290px; font-size: 27px; }
.caret { margin-right: 22px; }
.sep { width: 2px; height: 60px; background: #ddd; margin-right: 28px; }
.ph { margin-left: 15px; color: #bbb; }

.map { position: relative; width: 2346px; height: 925px; flex: none; }
.map-svg { display: block; }
.map-label { font-family: "Noto Sans", sans-serif; }
.here { font-family: "Liberation Sans", sans-serif; font-weight: 700; font-size: 36px; fill: #7f8a96; stroke: #fff; stroke-width: 4px; paint-order: stroke; }
.pin { position: absolute; left: 1077px; top: 292px; width: 66px; height: 100px; }
.pin svg { display: block; }
.pin span { position: absolute; top: 16px; left: 0; right: 0; text-align: center; color: #fff; font-size: 22px; font-weight: 600; }
.zoomer { position: absolute; left: 2281px; top: 382px; width: 55px; height: 134px; border-radius: 28px; background: #1d2229; display: flex; flex-direction: column; align-items: center; justify-content: center; gap: 24px; }
.layers { position: absolute; left: 2280px; top: 827px; width: 56px; height: 56px; border-radius: 50%; background: #1d2229; display: flex; align-items: center; justify-content: center; }
.scale { position: absolute; left: 2024px; top: 846px; width: 178px; height: 16px; border: 3px solid #222; border-top: 0; }
.km { position: absolute; left: 2224px; top: 843px; font-size: 21px; color: #444; }
.terms { position: absolute; left: 1872px; right: 0; top: 890px; height: 35px; background: rgba(255,255,255,.85); display: flex; align-items: center; gap: 42px; padding-left: 50px; font-size: 21px; color: #333; }
.chev { position: absolute; left: 2199px; top: 887px; width: 60px; height: 60px; border-radius: 50%; background: #1f2933; display: flex; align-items: center; justify-content: center; z-index: 2; }

.thead { width: 2323px; height: 102px; flex: none; border-bottom: 5px solid #0a7ccf; padding: 3px 0 0 79px; display: grid; grid-template-columns: 199px 291px 149px 174px 94px 149px 174px 94px 145px 146px 147px 199px 200px 83px; align-items: center; font-size: 24px; font-weight: 600; color: #222; }
.th { display: flex; align-items: center; gap: 9px; white-space: nowrap; }
.tr { width: 2346px; height: 80px; flex: none; border-bottom: 2px solid #ddd; display: grid; grid-template-columns: 79px 204px 290px 150px 174px 94px 150px 175px 94px 148px 149px 150px 203px 205px 81px; align-items: center; font-size: 24.300px; color: #222; }
.tr.even { background: #f9f9f9; }
.tr > div:not(.cb-cell) { padding-top: 2px; }
.cb-cell { padding-left: 19px; display: flex; }
.cb { width: 33px; height: 33px; border: 2px solid #d8d8d8; border-radius: 4px; background: #fff; }

.foot { margin-top: auto; height: 74px; display: flex; align-items: center; padding-left: 19px; font-size: 28.500px; color: #666; }
.showing { margin-right: auto; margin-top: -10px; }
.legend { display: flex; align-items: center; gap: 17px; }
.legend.hold { margin-left: 90px; margin-right: 37px; }
.sw { width: 31px; height: 30px; }
.teal { background: #d9fbf6; }
.rose { background: #ffd0d0; }

.right { flex: 1; min-width: 0; background: #fff; display: flex; flex-direction: column; position: relative; }
.toggle { position: absolute; left: -30px; top: 20px; width: 60px; height: 60px; border-radius: 50%; background: #1f2933; display: flex; align-items: center; justify-content: center; }
.sel-title { margin: 0; height: 114px; padding: 30px 0 0 61px; font-size: 38px; line-height: 48px; font-weight: 600; color: #111; }
.loc { position: relative; margin: 0 25px; height: 219px; background: #e6f1fb; border: 3px solid #1e78b8; border-radius: 8px; box-shadow: 0 4px 6px rgba(0,0,0,.35); padding: 22px 18px 0; }
.loc-x { position: absolute; right: 24px; top: 24px; }
.loc-name { font-size: 30.500px; line-height: 38px; font-weight: 500; color: #111; }
.loc-addr { margin-top: 13px; width: 480px; font-size: 26.500px; line-height: 33px; color: #222; }
.loc-foot { display: flex; justify-content: space-between; align-items: center; margin-top: 14px; }
.loc-foot b { font-size: 25px; font-weight: 600; color: #111; margin-top: -8px; }
.badge { width: 108px; height: 42px; border-radius: 4px; background: #3ea3ec; color: #fff; font-size: 24px; font-weight: 600; line-height: 42px; text-align: center; }
.fab { position: absolute; right: 10px; bottom: 76px; width: 112px; height: 112px; border-radius: 50%; background: #000; display: flex; align-items: center; justify-content: center; z-index: 2; }
.save { margin-top: auto; height: 92px; border: 0; background: #32880c; color: #fff; font-family: inherit; font-size: 32px; font-weight: 700; }
</style>
